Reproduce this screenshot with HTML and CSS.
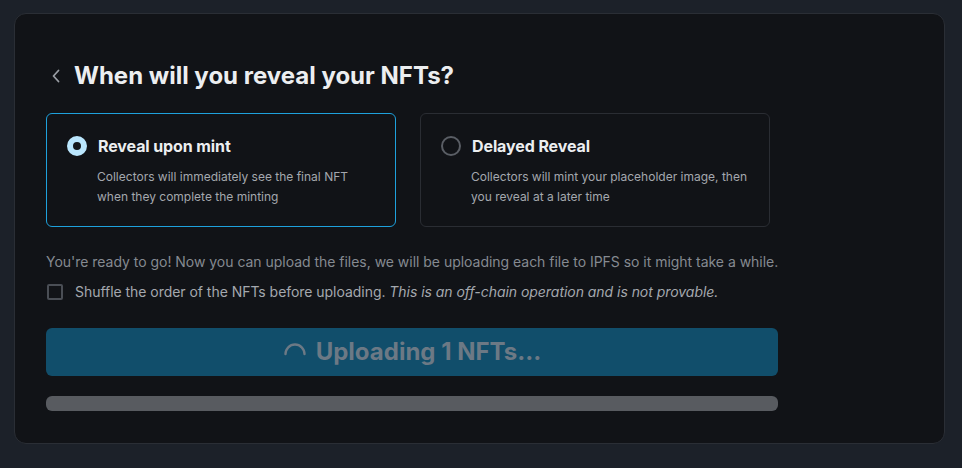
FILE: index.html
```html
<!DOCTYPE html>
<html>
<head>
<meta charset="utf-8">
<link rel="stylesheet" href="styles.css">
</head>
<body>
<div class="page">
  <div class="card">
    <div class="header">
      <svg class="chev" width="12" height="14" viewBox="0 0 12 14"><path d="M8.5 1.5 L3.5 7 L8.5 12.5" fill="none" stroke="#9a9ea5" stroke-width="1.8" stroke-linecap="round" stroke-linejoin="round"/></svg>
      <h1 class="title">When will you reveal your NFTs?</h1>
    </div>
    <div class="options">
      <div class="option selected">
        <div class="opt-head"><span class="radio on"></span><span class="opt-title">Reveal upon mint</span></div>
        <p class="opt-desc">Collectors will immediately see the final NFT when they complete the minting</p>
      </div>
      <div class="option">
        <div class="opt-head"><span class="radio"></span><span class="opt-title">Delayed Reveal</span></div>
        <p class="opt-desc">Collectors will mint your placeholder image, then you reveal at a later time</p>
      </div>
    </div>
    <p class="info">You're ready to go! Now you can upload the files, we will be uploading each file to IPFS so it might take a while.</p>
    <label class="check-row"><span class="checkbox"></span><span>Shuffle the order of the NFTs before uploading. <em>This is an off-chain operation and is not provable.</em></span></label>
    <div class="btn">
      <svg class="spin" width="24" height="24" viewBox="0 0 24 24"><path d="M2.5 13 A9.5 9.5 0 0 1 21.5 13" fill="none" stroke="#6c7985" stroke-width="2.4" stroke-linecap="round"/></svg>
      <span>Uploading 1 NFTs...</span>
    </div>
    <div class="progress"></div>
  </div>
</div>
</body>
</html>
```
FILE: styles.css
```css
* { box-sizing: border-box; }
html, body { margin: 0; padding: 0; }
body {
  background: #1c2129;
  font-family: Inter, "Liberation Sans", sans-serif;
  width: 962px;
  height: 468px;
  overflow: hidden;
}
.page { padding: 13px 17px 0 14px; }
.card {
  background: #111317;
  border: 1px solid #2a2e35;
  border-radius: 12px;
  height: 431px;
  padding: 47px 32px 0 31px;
}
.header { display: flex; align-items: center; gap: 12px; padding-left: 4px; }
.chev { display: block; }
.title {
  margin: 0;
  font-size: 24px;
  font-weight: 700;
  color: #eceef0;
  line-height: 30px;
  letter-spacing: 0;
}
.options { display: flex; gap: 24px; margin-top: 22px; }
.option {
  width: 350px;
  height: 114px;
  border: 1px solid #2a2d33;
  border-radius: 6px;
  padding: 20px 20px 0 20px;
}
.option.selected { border-color: #1ea1dc; }
.opt-head { display: flex; align-items: center; gap: 11px; }
.radio {
  width: 20px; height: 20px;
  border-radius: 50%;
  border: 2px solid #5a5e65;
  flex: none;
}
.radio.on {
  border: 6px solid #bae6fd;
  background: #15171b;
}
.opt-title { font-size: 16px; font-weight: 700; color: #eceef0; line-height: 24px; letter-spacing: -0.1px; }
.opt-desc {
  margin: 9px 0 0 30px;
  font-size: 12px;
  line-height: 19.5px;
  color: #a4a8ae;
}
.info {
  margin: 25px 0 0 0;
  font-size: 14px;
  line-height: 20px;
  color: #858a91;
  letter-spacing: -0.025px;
}
.check-row {
  display: flex; align-items: center; gap: 12px;
  margin-top: 10px;
  font-size: 14px;
  line-height: 20px;
  color: #a4a8ae;
  padding-left: 1px;
  letter-spacing: -0.04px;
}
.check-row em { color: #a4a8ae; }
.checkbox {
  width: 16px; height: 16px;
  border: 2px solid #4a4e55;
  border-radius: 2px;
  flex: none;
}
.btn {
  margin-top: 26px;
  width: 732px;
  height: 48px;
  background: #114e6b;
  border-radius: 6px;
  display: flex; align-items: center; justify-content: center;
  gap: 9px;
  font-size: 24px;
  font-weight: 700;
  color: #6c7985;
}
.btn span { line-height: 32px; }
.spin { display: block; margin-top: 2px; }
.progress {
  margin-top: 20px;
  width: 732px;
  height: 15px;
  background: #585b60;
  border-radius: 6px;
}
```
